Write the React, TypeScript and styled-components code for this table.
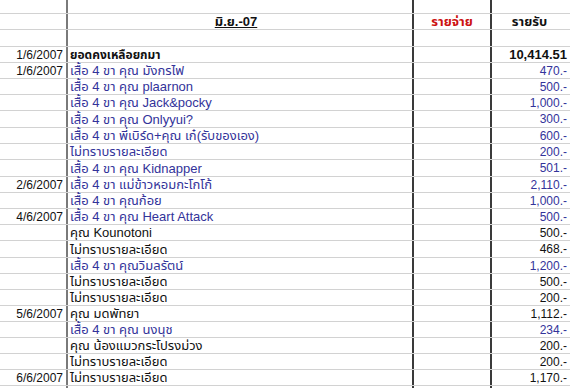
import React from 'react'
import styled, { createGlobalStyle } from 'styled-components'

const BLUE = '#33339a'
const BLACK = '#111111'

type Entry = {
  date?: string
  text: string
  amount: string
  blue?: boolean
  bold?: boolean
  tall?: boolean
}

const entries: Entry[] = [
  { date: '1/6/2007', text: 'ยอดคงเหลือยกมา', amount: '10,414.51', bold: true },
  { date: '1/6/2007', text: 'เสื้อ 4 ขา คุณ มังกรไฟ', amount: '470.-', blue: true },
  { text: 'เสื้อ 4 ขา คุณ plaarnon', amount: '500.-', blue: true },
  { text: 'เสื้อ 4 ขา คุณ Jack&pocky', amount: '1,000.-', blue: true },
  { text: 'เสื้อ 4 ขา คุณ Onlyyui?', amount: '300.-', blue: true, tall: true },
  { text: 'เสื้อ 4 ขา พี่เบิร์ด+คุณ เก๋(รับของเอง)', amount: '600.-', blue: true },
  { text: 'ไม่ทราบรายละเอียด', amount: '200.-', blue: true },
  { text: 'เสื้อ 4 ขา คุณ Kidnapper', amount: '501.-', blue: true, tall: true },
  { date: '2/6/2007', text: 'เสื้อ 4 ขา แม่ข้าวหอมกะโกโก้', amount: '2,110.-', blue: true },
  { text: 'เสื้อ 4 ขา คุณก้อย', amount: '1,000.-', blue: true },
  { date: '4/6/2007', text: 'เสื้อ 4 ขา คุณ Heart Attack', amount: '500.-', blue: true },
  { text: 'คุณ Kounotoni', amount: '500.-' },
  { text: 'ไม่ทราบรายละเอียด', amount: '468.-', tall: true },
  { text: 'เสื้อ 4 ขา คุณวิมลรัตน์', amount: '1,200.-', blue: true },
  { text: 'ไม่ทราบรายละเอียด', amount: '500.-' },
  { text: 'ไม่ทราบรายละเอียด', amount: '200.-' },
  { date: '5/6/2007', text: 'คุณ มดพัทยา', amount: '1,112.-' },
  { text: 'เสื้อ 4 ขา คุณ นงนุช', amount: '234.-', blue: true },
  { text: 'คุณ น้องแมวกระโปรงม่วง', amount: '200.-' },
  { text: 'ไม่ทราบรายละเอียด', amount: '200.-' },
  { date: '6/6/2007', text: 'ไม่ทราบรายละเอียด', amount: '1,170.-' },
  { text: '', amount: '' },
]

const App: React.FC = () => {
  return (
    <>
      <GlobalStyle />
      <Sheet>
        <Row $h={14}>
          <DateCell />
          <TextCell />
          <OutCell />
          <InCell />
        </Row>
        <Row $h={16}>
          <DateCell />
          <TitleCell>
            <Month>มิ.ย.-07</Month>
          </TitleCell>
          <OutCell>
            <Expense>รายจ่าย</Expense>
          </OutCell>
          <InCell $center>
            <Income>รายรับ</Income>
          </InCell>
        </Row>
        <Row $h={17}>
          <DateCell />
          <TextCell />
          <OutCell />
          <InCell />
        </Row>
        {entries.map((e, i) => (
          <Row key={i} $h={e.tall ? 17 : 16}>
            <DateCell>{e.date}</DateCell>
            <TextCell $blue={e.blue} $bold={e.bold}>
              {e.text}
            </TextCell>
            <OutCell />
            <InCell $blue={e.blue} $bold={e.bold}>
              {e.amount}
            </InCell>
          </Row>
        ))}
      </Sheet>
    </>
  )
}

const GlobalStyle = createGlobalStyle`
  html, body {
    margin: 0;
    padding: 0;
    background: #ffffff;
  }
  body {
    width: 570px;
    height: 388px;
    overflow: hidden;
    font-family: "Liberation Sans", "Noto Sans Thai", "Noto Sans", "DejaVu Sans", sans-serif;
  }
`

const Sheet = styled.div`
  width: 570px;
  display: flex;
  flex-direction: column;
`

const Row = styled.div<{ $h: number }>`
  display: grid;
  grid-template-columns: 68px 346px 78px 78px;
  height: ${({ $h }) => $h}px;
  box-sizing: border-box;
  border-bottom: 1px solid #d2d2d2;
  font-size: 12px;
  line-height: 1;
  color: ${BLACK};
`

const Cell = styled.div`
  display: flex;
  align-items: center;
  white-space: nowrap;
  overflow: visible;
  box-sizing: border-box;
  height: 100%;
  margin-bottom: -1px;
`

const DateCell = styled(Cell)`
  justify-content: flex-end;
  padding-right: 3px;
  border-right: 2px solid #7a7a7a;
`

const TextCell = styled(Cell)<{ $blue?: boolean; $bold?: boolean }>`
  padding-left: 2px;
  color: ${({ $blue }) => ($blue ? BLUE : BLACK)};
  font-weight: ${({ $bold }) => ($bold ? 700 : 400)};
  font-size: ${({ $bold }) => ($bold ? '12px' : '13px')};
  border-right: 2px solid #3a3a3a;
`

const TitleCell = styled(TextCell)`
  justify-content: center;
  padding-right: 10px;
`

const OutCell = styled(Cell)`
  justify-content: center;
  border-right: 2px solid #3a3a3a;
`

const InCell = styled(Cell)<{ $blue?: boolean; $bold?: boolean; $center?: boolean }>`
  justify-content: ${({ $center }) => ($center ? 'center' : 'flex-end')};
  padding-right: 3px;
  color: ${({ $blue }) => ($blue ? BLUE : BLACK)};
  font-weight: ${({ $bold }) => ($bold ? 700 : 400)};
  font-size: ${({ $bold }) => ($bold ? '13px' : '12px')};
`

const Month = styled.span`
  font-weight: 700;
  font-size: 13px;
  text-decoration: underline;
`

const Expense = styled.span`
  font-weight: 700;
  font-size: 13px;
  color: #cc1111;
`

const Income = styled.span`
  font-weight: 700;
  font-size: 13px;
  color: ${BLACK};
`

export default App
